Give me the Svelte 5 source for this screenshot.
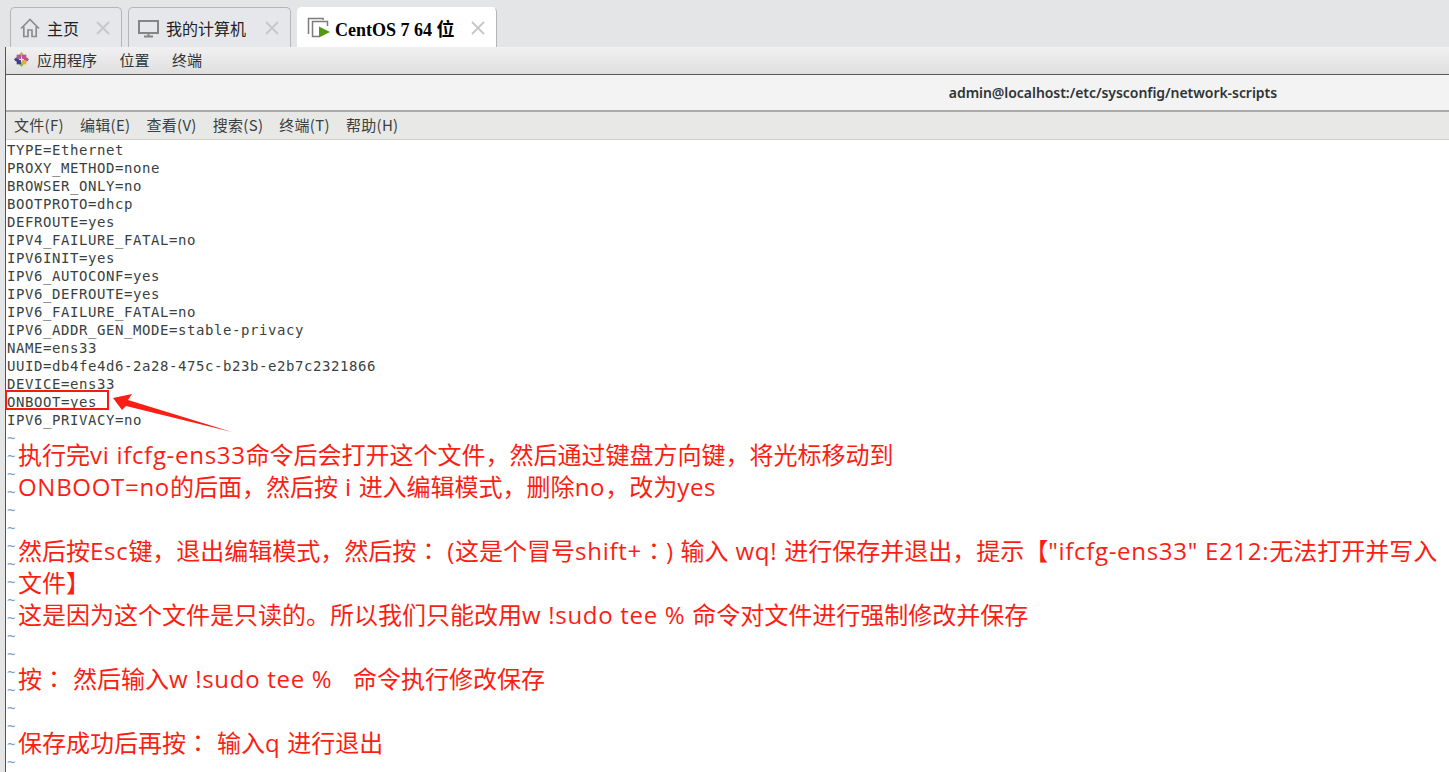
<script>
  const tabs = [
    { label: '主页', icon: 'home' },
    { label: '我的计算机', icon: 'pc' },
    { label: 'CentOS 7 64 位', icon: 'vm', active: true }
  ];
  const gnome = ['应用程序', '位置', '终端'];
  const menus = ['文件(F)', '编辑(E)', '查看(V)', '搜索(S)', '终端(T)', '帮助(H)'];
  const config = [
    'TYPE=Ethernet', 'PROXY_METHOD=none', 'BROWSER_ONLY=no', 'BOOTPROTO=dhcp', 'DEFROUTE=yes',
    'IPV4_FAILURE_FATAL=no', 'IPV6INIT=yes', 'IPV6_AUTOCONF=yes', 'IPV6_DEFROUTE=yes',
    'IPV6_FAILURE_FATAL=no', 'IPV6_ADDR_GEN_MODE=stable-privacy', 'NAME=ens33',
    'UUID=db4fe4d6-2a28-475c-b23b-e2b7c2321866', 'DEVICE=ens33', 'ONBOOT=yes', 'IPV6_PRIVACY=no'
  ];
  const tildes = Array.from({ length: 19 });
  const notes = [
    '执行完vi ifcfg-ens33命令后会打开这个文件，然后通过键盘方向键，将光标移动到',
    'ONBOOT=no的后面，然后按 i 进入编辑模式，删除no，改为yes',
    '\u00a0',
    '然后按Esc键，退出编辑模式，然后按： (这是个冒号shift+：) 输入 wq! 进行保存并退出，提示【"ifcfg-ens33" E212:无法打开并写入文件】',
    '这是因为这个文件是只读的。所以我们只能改用w !sudo tee % 命令对文件进行强制修改并保存',
    '\u00a0',
    '按： 然后输入w !sudo tee %   命令执行修改保存',
    '\u00a0',
    '保存成功后再按： 输入q 进行退出'
  ];
  // Latin runs and the full-width colon are styled apart from the CJK text.
  const runs = (s) => s.split(/([\x00-\x7f]+|：)/).filter(Boolean).map((text) => ({
    text,
    lat: /^[\x00-\x7f]/.test(text),
    colon: text === '：'
  }));
</script>

<div class="shell">
  <div class="tabs">
    {#each tabs as t}
      <div class="tab" class:active={t.active}>
        {#if t.icon === 'home'}
          <svg class="ico home" viewBox="0 0 20 20" fill="none" stroke="#8c8c8c" stroke-width="1.700"><path d="M1 10.500 10 1.500l9 9M3.800 8.500V18.500H8v-6.500h4v6.500h4.200V8.500"/></svg>
        {:else if t.icon === 'pc'}
          <svg class="ico pc" viewBox="0 0 21 20" fill="none" stroke="#858585" stroke-width="2"><rect x="1" y="3" width="19" height="12"/><path d="M10.500 15v3M6 18.500h9"/></svg>
        {:else}
          <svg class="ico vm" viewBox="0 0 23 21" fill="none"><path d="M1.500 17V1.500H16V3" stroke="#7c7c7c" stroke-width="1.500"/><path d="M12 19.500H5.500V4.500H20.500V9" stroke="#7c7c7c" stroke-width="1.500"/><path d="M12 9.500 23 15 12 20.500z" fill="#4f9a10"/></svg>
        {/if}
        <span class="tab-label">{t.label}</span>
        <svg class="close" viewBox="0 0 14 14" stroke="#c6c7c9" stroke-width="1.800"><path d="M1 1l12 12M13 1 1 13"/></svg>
      </div>
    {/each}
  </div>

  <div class="desktop">
    <div class="gnome">
      <svg class="logo" viewBox="0 0 14 14">
        <path d="M7 0l2 2-2 3-2-3z" fill="#a8c04a"/><path d="M14 7l-2 2-3-2 3-2z" fill="#a8528f"/>
        <path d="M7 14l-2-2 2-3 2 3z" fill="#8fbc3c"/><path d="M0 7l2-2 3 2-3 2z" fill="#45437f"/>
        <rect x="2.500" y="2.500" width="4" height="4" fill="#b0569a"/><rect x="7.500" y="2.500" width="4" height="4" fill="#c94f8c"/>
        <rect x="2.500" y="7.500" width="4" height="4" fill="#3d3f8f"/><rect x="7.500" y="7.500" width="4" height="4" fill="#e8a93a"/>
      </svg>
      {#each gnome as g}<span class="gnome-item">{g}</span>{/each}
    </div>

    <div class="titlebar">admin@localhost:/etc/sysconfig/network-scripts</div>

    <div class="menu">
      {#each menus as m}<span>{m}</span>{/each}
    </div>

    <div class="term">
      {#each config as line}<div class="line">{line}</div>{/each}
      {#each tildes as _}<div class="line tilde">~</div>{/each}

      <div class="highlight"></div>
      <svg class="arrow" viewBox="0 0 120 38"><path d="M0 4 19 0 15 6 119 38 13 12 9 16z" fill="#fb1e14"/></svg>
      <div class="notes">
        {#each notes as n}
          <div>{#each runs(n) as r}<span class:lat={r.lat} class:colon={r.colon}>{r.text}</span>{/each}</div>
        {/each}
      </div>
    </div>
  </div>
</div>

<style>
  :global(body) { margin: 0; overflow: hidden; background: #fff; }
  .shell {
    width: 1449px; height: 772px; overflow: hidden; background: #e4e5e7;
    font-family: "Noto Sans CJK SC", "Noto Sans", sans-serif;
  }
  .tabs { height: 47px; display: flex; gap: 6px; padding: 7px 0 0 10px; box-sizing: border-box; }
  .tab {
    height: 40px; display: flex; align-items: center; box-sizing: border-box; padding: 0 11px 0 9px;
    border: 1px solid #b4b5b7; border-bottom: 0; border-radius: 5px 5px 0 0; background: #e6e7ea;
    font-size: 16px; color: #222;
  }
  .tab:nth-child(1) { width: 112px; }
  .tab:nth-child(2) { width: 163px; }
  .tab:nth-child(3) { width: 200px; background: #fff; border-color: #fff #b4b5b7 #fff #fff; }
  .tab.active .tab-label { font-family: "Liberation Serif", "Noto Sans CJK SC", serif; font-weight: 700; font-size: 18px; color: #000; }
  .ico { flex: none; height: 20px; margin-right: 7px; }
  .home { width: 20px; }
  .pc { width: 21px; }
  .vm { width: 23px; height: 21px; margin-right: 5px; }
  .tab-label { flex: 1; white-space: nowrap; }
  .close { width: 14px; height: 14px; flex: none; }

  .desktop { margin-left: 5px; border-left: 1px solid #555; height: 725px; }
  .gnome {
    height: 28px; box-sizing: border-box; display: flex; align-items: center; padding: 0 0 3px 8px;
    background: linear-gradient(#f1f1f1, #dfdfdf); border-bottom: 1px solid #5a5a5a;
    font-size: 15px; color: #2e3436;
  }
  .logo { width: 15px; height: 15px; margin-right: 8px; }
  .gnome-item { margin-right: 22.5px; }
  .titlebar {
    height: 37px; box-sizing: border-box; background: #f3f3f3; border-bottom: 2px solid #a9a9a9;
    padding-right: 172px; display: flex; align-items: center; justify-content: flex-end;
    font: 600 14px "Noto Sans", sans-serif; letter-spacing: -.05px; color: #2e3436;
  }
  .menu {
    height: 28px; box-sizing: border-box; display: flex; align-items: center; gap: 16px; padding: 0 0 2px 8px;
    background: #e8e8e7; border-bottom: 1px solid #d0d0ce; font-size: 15px; letter-spacing: .3px; color: #3a3f40;
  }
  .term { position: relative; background: #fff; height: 632px; box-sizing: border-box; padding: 1px 0 0 1px; }
  .line { height: 18px; font: 14px/18px "DejaVu Sans Mono", monospace; letter-spacing: .57px; color: #3a3f40; white-space: pre; }
  .tilde { color: #7f9fd0; }
  .highlight { position: absolute; left: -1px; top: 250px; width: 100px; height: 16px; border: 2px solid #f31b12; }
  .arrow { position: absolute; left: 107px; top: 254px; width: 120px; height: 38px; }
  .notes {
    position: absolute; left: 12px; top: 299px; width: 1425px; white-space: pre-wrap;
    font: 24px/32px "Open Sans", "Noto Sans CJK SC", sans-serif; color: #fb1e14;
  }
  .notes span { line-height: 0; }
  .lat { letter-spacing: .7px; }
  .colon { font-family: "Noto Sans CJK TC", sans-serif; }
</style>
